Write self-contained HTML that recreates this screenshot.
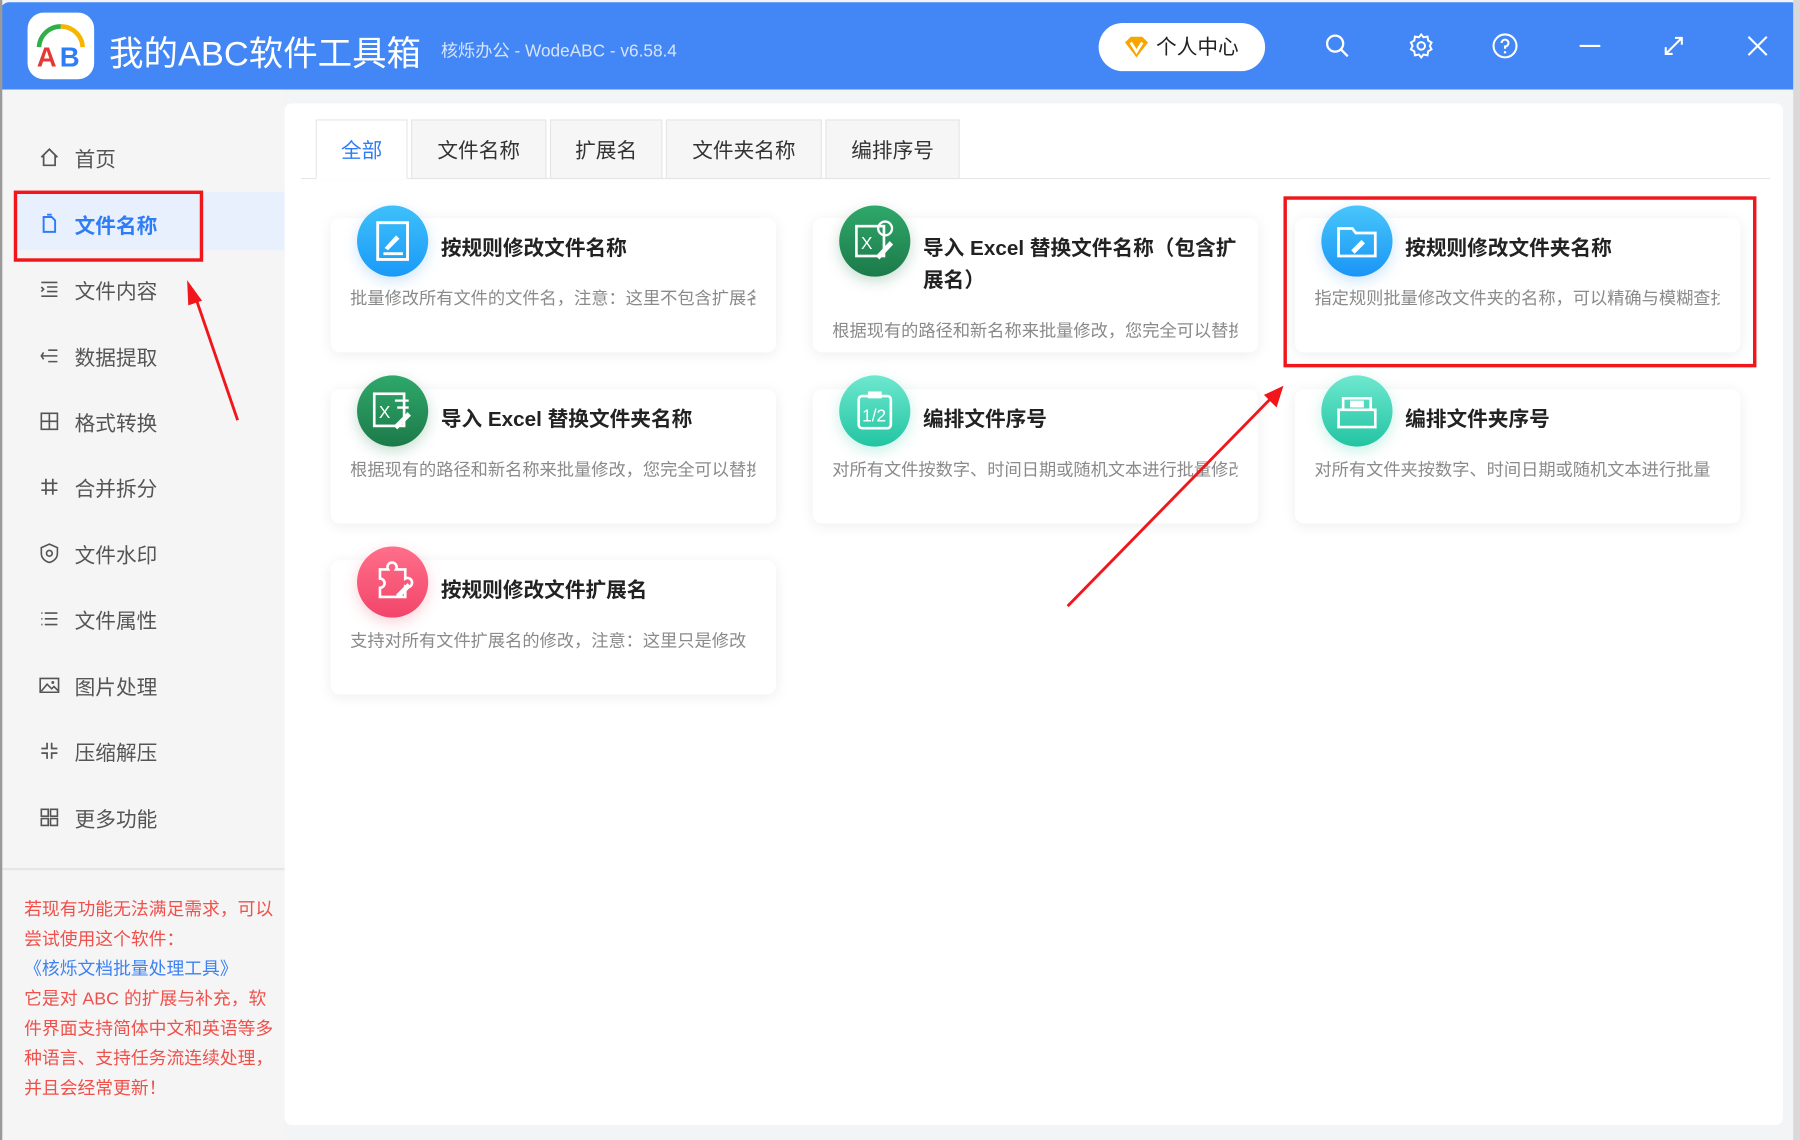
<!DOCTYPE html>
<html><head><meta charset="utf-8"><style>
*{margin:0;padding:0;box-sizing:border-box}
html,body{width:1800px;height:1140px;overflow:hidden;background:#f3f4f6}
body{font-family:"Liberation Sans","Noto Sans CJK SC",sans-serif}
#w{position:absolute;left:0;top:0;width:1568px;height:993px;transform:scale(1.148);transform-origin:0 0;background:#f3f4f6;overflow:hidden}
.abs{position:absolute}
#tb{left:0;top:2px;width:1568px;height:76px;background:#4387f6;border-radius:8px 8px 0 0}
#logo{left:24px;top:11px;width:58px;height:58px;background:#fff;border-radius:14px}
#title{left:95px;top:22px;color:#fff;font-size:30px;white-space:nowrap}
#ver{left:384px;top:33px;color:#d8e4fb;font-size:15px;white-space:nowrap}
#uc{left:957px;top:20px;width:145px;height:42px;background:#fff;border-radius:21px;font-size:18px;color:#222;line-height:42px;padding-left:50px}
.ti{top:28px;width:24px;height:24px}
#side{left:2px;top:78px;width:246px;height:915px;background:#f5f5f6}
.si{position:absolute;left:65px;font-size:18px;color:#555;white-space:nowrap}
.sic{position:absolute;left:34px;width:18px;height:18px}
#act{left:12px;top:167px;width:236px;height:51px;background:#e9f0fd}
#main{left:248px;top:90px;width:1305px;height:890px;background:#fff;border-radius:6px}
.tab{position:absolute;top:104px;height:52px;background:#f6f6f7;border:1px solid #e6e6e6;font-size:18px;color:#333;line-height:52px;text-align:center}
.card{position:absolute;width:388px;height:117px;background:#fff;border-radius:8px;box-shadow:0 2px 12px rgba(0,0,0,.07)}
.ic{position:absolute;width:62px;height:62px;border-radius:50%;box-shadow:0 4px 12px rgba(60,150,240,.25)}
.ct{position:absolute;font-size:18px;font-weight:bold;color:#222;line-height:28px}
.cd{position:absolute;font-size:15px;color:#8a8a8a;white-space:nowrap;overflow:hidden}
.red{color:#f0504a;font-size:15.5px;line-height:26px}
</style></head><body><div id="w">
<div id="tb" class="abs"></div>
<div id="logo" class="abs"><svg width="58" height="58" viewBox="0 0 58 58"><path d="M10 30 A19 19 0 0 1 29 12" stroke="#2fae4a" stroke-width="4" fill="none"/><path d="M29 12 A19 19 0 0 1 48 30" stroke="#f7b500" stroke-width="4" fill="none"/><text x="8" y="47" font-family="Liberation Sans" font-weight="bold" font-size="24" fill="#e53935">A</text><text x="28" y="47" font-family="Liberation Sans" font-weight="bold" font-size="24" fill="#2f7df6">B</text></svg></div>
<div id="title" class="abs">我的ABC软件工具箱</div>
<div id="ver" class="abs">核烁办公 - WodeABC - v6.58.4</div>
<div id="uc" class="abs"><svg class="abs" style="left:22px;top:11px" width="22" height="20" viewBox="0 0 22 20"><path d="M1 6 L6 1 H16 L21 6 L11 19Z" fill="#f7a600"/><path d="M6 6 L11 14 L16 6" stroke="#fff" stroke-width="2.4" fill="none"/></svg>个人中心</div>
<svg class="abs ti" style="left:1153px" viewBox="0 0 24 24"><circle cx="10" cy="10" r="7" stroke="#fff" stroke-width="2" fill="none"/><path d="M15 15 L21 21" stroke="#fff" stroke-width="2"/></svg>
<svg class="abs ti" style="left:1226px" viewBox="0 0 24 24"><path d="M12 2 L14 4.5 L17.5 3.8 L18 7.3 L21 9 L19.5 12 L21 15 L18 16.7 L17.5 20.2 L14 19.5 L12 22 L10 19.5 L6.5 20.2 L6 16.7 L3 15 L4.5 12 L3 9 L6 7.3 L6.5 3.8 L10 4.5Z" stroke="#fff" stroke-width="1.7" fill="none"/><circle cx="12" cy="12" r="3.3" stroke="#fff" stroke-width="1.7" fill="none"/></svg>
<svg class="abs ti" style="left:1299px" viewBox="0 0 24 24"><circle cx="12" cy="12" r="10" stroke="#fff" stroke-width="1.8" fill="none"/><path d="M9 9.5 A3 3 0 1 1 12 12.5 V14.5" stroke="#fff" stroke-width="1.8" fill="none"/><circle cx="12" cy="17.5" r="1.1" fill="#fff"/></svg>
<svg class="abs ti" style="left:1373px" viewBox="0 0 24 24"><path d="M3 12 H21" stroke="#fff" stroke-width="1.8"/></svg>
<svg class="abs ti" style="left:1446px" viewBox="0 0 24 24"><path d="M5 19 L19 5 M13 5 H19 V11 M5 13 V19 H11" stroke="#fff" stroke-width="1.8" fill="none"/></svg>
<svg class="abs ti" style="left:1519px" viewBox="0 0 24 24"><path d="M4 4 L20 20 M20 4 L4 20" stroke="#fff" stroke-width="1.8"/></svg>

<div id="side" class="abs"></div>
<div id="act" class="abs"></div>
<div class="abs" style="left:0;top:756px;width:248px;height:2px;background:#e6e6e6"></div>
<div class="abs" style="left:0;top:0;width:2px;height:993px;background:#9a9a9a"></div>
<div style="position:absolute;left:0;top:0;width:248px;height:993px">
<div class="si" style="top:125px">首页</div>
<div class="si" style="top:183px;color:#2f7df6;font-weight:bold">文件名称</div>
<div class="si" style="top:240px">文件内容</div>
<div class="si" style="top:298px">数据提取</div>
<div class="si" style="top:355px">格式转换</div>
<div class="si" style="top:412px">合并拆分</div>
<div class="si" style="top:470px">文件水印</div>
<div class="si" style="top:527px">文件属性</div>
<div class="si" style="top:585px">图片处理</div>
<div class="si" style="top:642px">压缩解压</div>
<div class="si" style="top:700px">更多功能</div>
<svg class="sic" style="top:128px" viewBox="0 0 18 18"><path d="M2 9 L9 2 L16 9 M4 7 V16 H14 V7" stroke="#555" stroke-width="1.5" fill="none"/></svg>
<svg class="sic" style="top:186px" viewBox="0 0 18 18"><path d="M4 3 H11 L14 6 V16 H4Z M7 1 H11" stroke="#2f7df6" stroke-width="1.7" fill="none"/></svg>
<svg class="sic" style="top:243px" viewBox="0 0 18 18"><path d="M2 3 H16 M7 7 H16 M7 11 H16 M2 15 H16 M2 7 L4 9 L2 11" stroke="#555" stroke-width="1.4" fill="none"/></svg>
<svg class="sic" style="top:301px" viewBox="0 0 18 18"><path d="M2 9 H16 M8 4 H16 M8 14 H16 M4 6 L2 9 L4 12" stroke="#555" stroke-width="1.4" fill="none"/></svg>
<svg class="sic" style="top:358px" viewBox="0 0 18 18"><path d="M2 2 H16 V16 H2Z M2 9 H16 M9 2 V16" stroke="#555" stroke-width="1.4" fill="none"/></svg>
<svg class="sic" style="top:415px" viewBox="0 0 18 18"><path d="M6 2 V16 M12 2 V16 M2 6 H16 M2 12 H16" stroke="#555" stroke-width="1.5" fill="none"/></svg>
<svg class="sic" style="top:473px" viewBox="0 0 18 18"><path d="M9 1 L16 4 V9 C16 13 13 16 9 17 C5 16 2 13 2 9 V4Z" stroke="#555" stroke-width="1.4" fill="none"/><circle cx="9" cy="9" r="2.5" stroke="#555" stroke-width="1.4" fill="none"/></svg>
<svg class="sic" style="top:530px" viewBox="0 0 18 18"><path d="M5 4 H16 M5 9 H16 M5 14 H16 M2 4 H3 M2 9 H3 M2 14 H3" stroke="#555" stroke-width="1.4" fill="none"/></svg>
<svg class="sic" style="top:588px" viewBox="0 0 18 18"><path d="M1 3 H17 V15 H1Z M2 14 L7 8 L11 12 L13 10 L17 14" stroke="#555" stroke-width="1.4" fill="none"/><circle cx="12" cy="6.5" r="1.3" fill="#555"/></svg>
<svg class="sic" style="top:645px" viewBox="0 0 18 18"><path d="M7 2 V7 H2 M11 2 V7 H16 M7 16 V11 H2 M11 16 V11 H16" stroke="#555" stroke-width="1.5" fill="none"/></svg>
<svg class="sic" style="top:703px" viewBox="0 0 18 18"><path d="M2 2 H8 V8 H2Z M10 2 H16 V8 H10Z M2 10 H8 V16 H2Z M10 10 H16 V16 H10Z" stroke="#555" stroke-width="1.4" fill="none"/></svg>
</div>
<div class="abs" style="left:12px;top:166px;width:165px;height:62px;border:3px solid #f0161b"></div>
<div class="abs red" style="left:21px;top:780px;width:222px">若现有功能无法满足需求，可以尝试使用这个软件：<br><span style="color:#3d82f0">《核烁文档批量处理工具》</span><br>它是对 ABC 的扩展与补充，软件界面支持简体中文和英语等多种语言、支持任务流连续处理，并且会经常更新！</div>

<div id="main" class="abs"></div>
<div class="abs" style="left:262px;top:155px;width:1280px;height:1px;background:#e6e6e6"></div>
<div class="tab" style="left:275px;width:80px;background:#fff;color:#2f7df6;border-bottom-color:#fff">全部</div>
<div class="tab" style="left:358px;width:118px">文件名称</div>
<div class="tab" style="left:479px;width:98px">扩展名</div>
<div class="tab" style="left:580px;width:136px">文件夹名称</div>
<div class="tab" style="left:719px;width:117px">编排序号</div>

<div class="card" style="left:288px;top:190px"></div>
<div class="card" style="left:708px;top:190px"></div>
<div class="card" style="left:1128px;top:190px"></div>
<div class="card" style="left:288px;top:339px"></div>
<div class="card" style="left:708px;top:339px"></div>
<div class="card" style="left:1128px;top:339px"></div>
<div class="card" style="left:288px;top:488px"></div>

<div class="ic" style="left:311px;top:179px;background:linear-gradient(#3fc0fb,#1a9af7)"><svg width="62" height="62"><rect x="18" y="15" width="26" height="32" stroke="#fff" stroke-width="2.5" fill="none"/><path d="M24 37 L34 26 L37 29 L27 39" fill="#fff"/><path d="M23 42 H40" stroke="#fff" stroke-width="2.5"/></svg></div>
<div class="ic" style="left:731px;top:179px;background:linear-gradient(#2fa86a,#1c7a4a);box-shadow:0 4px 12px rgba(30,120,70,.25)"><svg width="62" height="62"><rect x="15" y="18" width="24" height="26" stroke="#fff" stroke-width="2.3" fill="none"/><text x="19" y="38" font-size="15" fill="#fff" font-family="Liberation Sans">X</text><circle cx="40" cy="20" r="6" stroke="#fff" stroke-width="2" fill="none"/><path d="M32 44 L44 31 L47 34 L35 47" fill="#fff"/></svg></div>
<div class="ic" style="left:1151px;top:179px;background:linear-gradient(#48c6fb,#1a95f6)"><svg width="62" height="62"><path d="M15 20 H27 L30 24 H47 V44 H15Z" stroke="#fff" stroke-width="2.4" fill="none"/><path d="M26 39 L35 30 L38 33 L29 42Z" fill="#fff"/></svg></div>
<div class="ic" style="left:311px;top:327px;background:linear-gradient(#2fa86a,#1c7a4a);box-shadow:0 4px 12px rgba(30,120,70,.25)"><svg width="62" height="62"><rect x="15" y="16" width="26" height="28" stroke="#fff" stroke-width="2.3" fill="none"/><text x="19" y="37" font-size="15" fill="#fff" font-family="Liberation Sans">X</text><path d="M33 22 H45 M35 28 H45" stroke="#fff" stroke-width="2"/><path d="M32 44 L44 32 L47 35 L35 47" fill="#fff"/></svg></div>
<div class="ic" style="left:731px;top:327px;background:linear-gradient(#6ee8cf,#22c4a2);box-shadow:0 4px 12px rgba(40,200,160,.25)"><svg width="62" height="62"><rect x="17" y="18" width="28" height="28" rx="3" stroke="#fff" stroke-width="2.3" fill="none"/><rect x="25" y="14" width="12" height="6" fill="#fff"/><text x="20" y="40" font-size="15" fill="#fff" font-family="Liberation Sans">1/2</text></svg></div>
<div class="ic" style="left:1151px;top:327px;background:linear-gradient(#6ee8cf,#22c4a2);box-shadow:0 4px 12px rgba(40,200,160,.25)"><svg width="62" height="62"><path d="M15 30 H47 V45 H15Z M19 30 V20 H43 V30" stroke="#fff" stroke-width="2.3" fill="none"/><path d="M25 22 H37 V28 H25Z" fill="#fff"/></svg></div>
<div class="ic" style="left:311px;top:476px;background:linear-gradient(#ff6f8a,#f2456a);box-shadow:0 4px 12px rgba(240,70,100,.25)"><svg width="62" height="62"><path d="M20 20 H27 A4 4 0 1 1 34 20 H42 V28 A4 4 0 1 1 42 35 V44 H20 V36 A4 4 0 1 0 20 28Z" stroke="#fff" stroke-width="2.3" fill="none"/><path d="M34 42 L44 32 L47 35 L37 45Z" fill="#fff"/></svg></div>

<div class="ct" style="left:384px;top:202px">按规则修改文件名称</div>
<div class="ct" style="left:804px;top:202px;width:280px">导入 Excel 替换文件名称（包含扩展名）</div>
<div class="ct" style="left:1224px;top:202px">按规则修改文件夹名称</div>
<div class="ct" style="left:384px;top:351px">导入 Excel 替换文件夹名称</div>
<div class="ct" style="left:804px;top:351px">编排文件序号</div>
<div class="ct" style="left:1224px;top:351px">编排文件夹序号</div>
<div class="ct" style="left:384px;top:500px">按规则修改文件扩展名</div>
<div class="cd" style="left:305px;top:249px;width:353px">批量修改所有文件的文件名，注意：这里不包含扩展名</div>
<div class="cd" style="left:725px;top:277px;width:353px">根据现有的路径和新名称来批量修改，您完全可以替换</div>
<div class="cd" style="left:1145px;top:249px;width:353px">指定规则批量修改文件夹的名称，可以精确与模糊查找</div>
<div class="cd" style="left:305px;top:398px;width:353px">根据现有的路径和新名称来批量修改，您完全可以替换</div>
<div class="cd" style="left:725px;top:398px;width:353px">对所有文件按数字、时间日期或随机文本进行批量修改</div>
<div class="cd" style="left:1145px;top:398px;width:353px">对所有文件夹按数字、时间日期或随机文本进行批量</div>
<div class="cd" style="left:305px;top:547px;width:353px">支持对所有文件扩展名的修改，注意：这里只是修改</div>

<div class="abs" style="left:1118px;top:171px;width:412px;height:149px;border:3px solid #f0161b"></div>
<svg class="abs" style="left:0;top:0" width="1568" height="993"><path d="M207 366 L170 258" stroke="#f0161b" stroke-width="2.5"/><path d="M163 244 L176 262 L164 266Z" fill="#f0161b"/><path d="M930 528 L1108 346" stroke="#f0161b" stroke-width="2.5"/><path d="M1118 336 L1112 355 L1101 344Z" fill="#f0161b"/></svg>
<div class="abs" style="left:1562px;top:0;width:6px;height:993px;background:#d9d9d9"></div>
</div></body></html>
